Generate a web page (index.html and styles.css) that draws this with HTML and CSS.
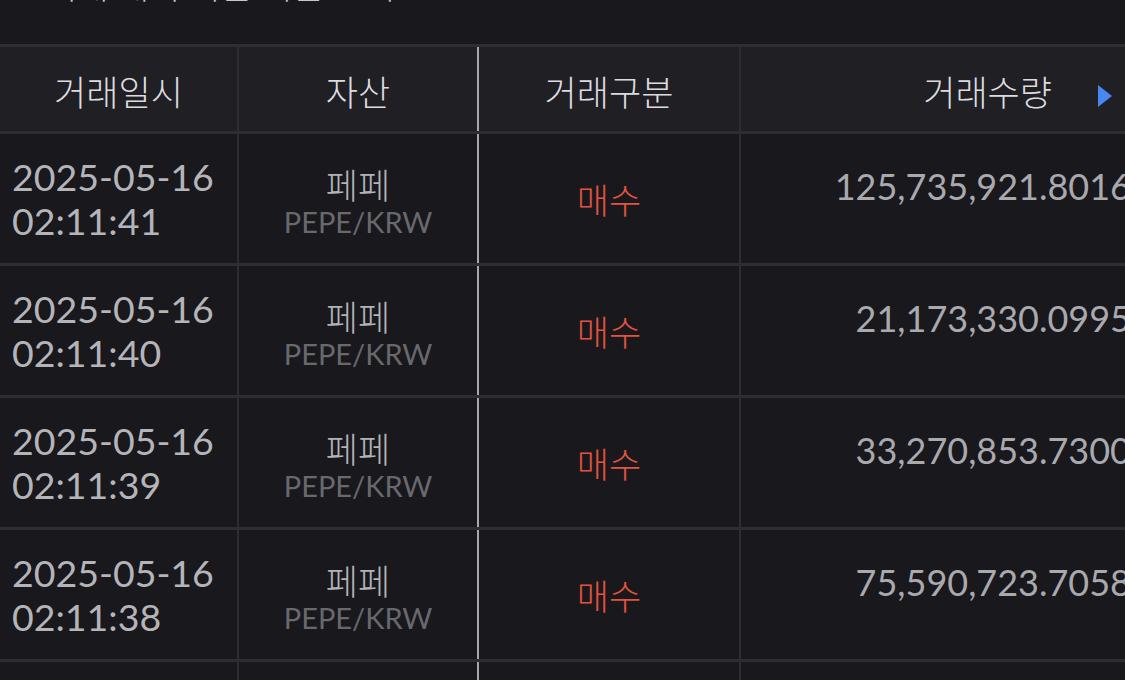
FILE: index.html
```html
<!DOCTYPE html>
<html lang="ko">
<head>
<meta charset="utf-8">
<title>거래내역</title>
<link rel="stylesheet" href="styles.css">
</head>
<body>
<div class="page">
  <div class="top-area">
    <div class="top-text">거래 내역 최근 기준 조회</div>
  </div>
  <div class="table">
    <div class="row head">
      <div class="cell c1 center">거래일시</div>
      <div class="cell c2 center">자산</div>
      <div class="cell c3 center">거래구분</div>
      <div class="cell c4 head-right">거래수량</div>
      <svg class="scroll-arrow" width="14" height="22" viewBox="0 0 14 22"><path d="M0 0 L14 11 L0 22 Z" fill="#4a86ef"/></svg>
    </div>

    <div class="row">
      <div class="cell c1 date"><span>2025-05-16</span><span>02:11:41</span></div>
      <div class="cell c2 asset"><span class="asset-name">페페</span><span class="asset-pair">PEPE/KRW</span></div>
      <div class="cell c3 center buy">매수</div>
      <div class="cell c4 qty">125,735,921.8016</div>
    </div>
    <div class="row">
      <div class="cell c1 date"><span>2025-05-16</span><span>02:11:40</span></div>
      <div class="cell c2 asset"><span class="asset-name">페페</span><span class="asset-pair">PEPE/KRW</span></div>
      <div class="cell c3 center buy">매수</div>
      <div class="cell c4 qty">21,173,330.0995</div>
    </div>
    <div class="row">
      <div class="cell c1 date"><span>2025-05-16</span><span>02:11:39</span></div>
      <div class="cell c2 asset"><span class="asset-name">페페</span><span class="asset-pair">PEPE/KRW</span></div>
      <div class="cell c3 center buy">매수</div>
      <div class="cell c4 qty">33,270,853.7300</div>
    </div>
    <div class="row">
      <div class="cell c1 date"><span>2025-05-16</span><span>02:11:38</span></div>
      <div class="cell c2 asset"><span class="asset-name">페페</span><span class="asset-pair">PEPE/KRW</span></div>
      <div class="cell c3 center buy">매수</div>
      <div class="cell c4 qty">75,590,723.7058</div>
    </div>
    <div class="row">
      <div class="cell c1 date"><span>2025-05-16</span><span>02:11:37</span></div>
      <div class="cell c2 asset"><span class="asset-name">페페</span><span class="asset-pair">PEPE/KRW</span></div>
      <div class="cell c3 center buy">매수</div>
      <div class="cell c4 qty">12,480,112.3310</div>
    </div>
  </div>
</div>
</body>
</html>
```

FILE: styles.css
```css
html, body {
  margin: 0;
  padding: 0;
  background: #18181d;
  overflow: hidden;
}
.page {
  width: 1125px;
  height: 680px;
  overflow: hidden;
  font-family: Lato, "Noto Sans CJK KR", sans-serif;
  background: #18181d;
}
.top-area {
  height: 44px;
  overflow: hidden;
  position: relative;
}
.top-text {
  margin-top: -34px;
  padding-left: 46px;
  font-size: 34px;
  line-height: 40px;
  font-weight: 300;
  color: #c8c8cc;
}
.table {
  width: 1161px;
  border-top: 3px solid #2d2d33;
}
.row {
  display: grid;
  grid-template-columns: 239px 240px 262px 420px;
  height: 132px;
  box-sizing: border-box;
  border-bottom: 3px solid #2d2d33;
  position: relative;
}
.row.head {
  height: 87px;
  background: #1f1f24;
}
.cell {
  box-sizing: border-box;
  border-right: 2px solid #2d2d33;
  display: flex;
  min-width: 0;
}
.cell.c2 {
  border-right: 2px solid #a7a7ab;
}
.cell.c4 {
  border-right: none;
}
.center {
  align-items: center;
  justify-content: center;
}
.head .cell {
  font-size: 35px;
  font-weight: 300;
  color: #dcdce0;
  padding-top: 2px;
}
.head-right {
  align-items: center;
  justify-content: flex-end;
  padding-right: 109px;
}
.scroll-arrow {
  position: absolute;
  left: 1098px;
  top: 38px;
}
.date {
  flex-direction: column;
  justify-content: center;
  padding-left: 12px;
  font-size: 37.5px;
  line-height: 44px;
  color: #b4b4b9;
}
.asset {
  flex-direction: column;
  justify-content: center;
  align-items: center;
  padding-top: 8px;
}
.asset-name {
  font-size: 35px;
  font-weight: 300;
  line-height: 38px;
  color: #b2b2b7;
}
.asset-pair {
  font-size: 29px;
  line-height: 36px;
  color: #68686d;
}
.buy {
  font-size: 35px;
  font-weight: 300;
  color: #e4533f;
}
.qty {
  justify-content: flex-end;
  align-items: flex-start;
  padding-top: 30px;
  padding-right: 30px;
  font-size: 36px;
  line-height: 44px;
  color: #a9a9ae;
  white-space: nowrap;
}
```
